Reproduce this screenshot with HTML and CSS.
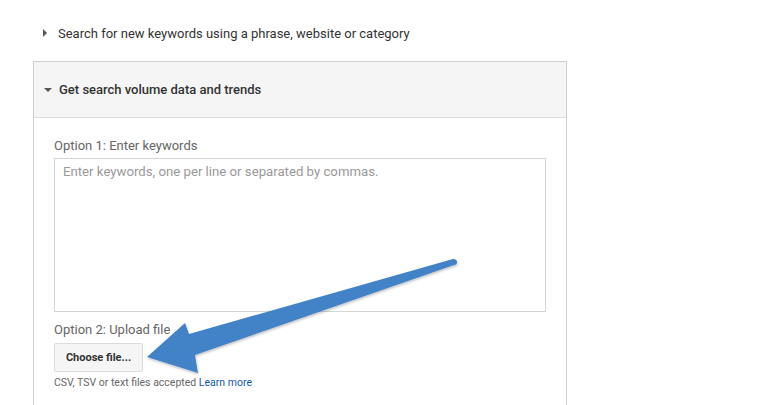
FILE: index.html
```html
<!DOCTYPE html>
<html>
<head>
<meta charset="utf-8">
<link rel="stylesheet" href="styles.css">
</head>
<body>
<div class="page">
  <div class="collapsed-item">
    <span class="tri-right"></span>
    <span class="collapsed-label">Search for new keywords using a phrase, website or category</span>
  </div>
  <div class="panel">
    <div class="panel-header">
      <span class="tri-down"></span>
      <span class="panel-title">Get search volume data and trends</span>
    </div>
    <div class="panel-body">
      <div class="field-label">Option 1: Enter keywords</div>
      <div class="textarea">Enter keywords, one per line or separated by commas.</div>
      <div class="field-label second">Option 2: Upload file</div>
      <div class="button">Choose file...</div>
      <div class="hint">CSV, TSV or text files accepted <span class="link">Learn more</span></div>
    </div>
  </div>
  <svg class="arrow" width="770" height="405" viewBox="0 0 770 405">
    <defs>
      <filter id="sh" x="-10%" y="-10%" width="120%" height="130%">
        <feDropShadow dx="0.5" dy="1.5" stdDeviation="1" flood-color="#000" flood-opacity="0.25"/>
      </filter>
    </defs>
    <path d="M147 357 L185 323 L189 334 L453 259 Q457 259 457 262 Q457 265 454 265 L195 355 L198 373 Z" fill="#4282c7" filter="url(#sh)"/>
  </svg>
</div>
</body>
</html>
```
FILE: styles.css
```css
* { box-sizing: border-box; }
html, body { margin: 0; padding: 0; background: #fff; }
body { font-family: Roboto, "Liberation Sans", Arial, sans-serif; color: #333; }
.page { position: relative; width: 770px; height: 405px; overflow: hidden; }
.collapsed-item {
  display: flex; align-items: center;
  height: 20px; margin-top: 23px; padding-left: 43px;
}
.tri-right {
  width: 0; height: 0;
  border-top: 4px solid transparent; border-bottom: 4px solid transparent;
  border-left: 4px solid #555;
  margin-right: 11px;
}
.collapsed-label { font-size: 13px; color: #333; }
.panel {
  margin-top: 18px; margin-left: 33px; width: 534px; height: 360px;
  border: 1px solid #d0d0d0; border-bottom: none;
}
.panel-header {
  height: 56px; background: #f5f5f5; border-bottom: 1px solid #dcdcdc;
  display: flex; align-items: center; padding-left: 10px;
}
.tri-down {
  width: 0; height: 0;
  border-left: 4px solid transparent; border-right: 4px solid transparent;
  border-top: 4px solid #555;
  margin-right: 7px;
}
.panel-title { font-size: 13px; font-weight: 500; color: #333; }
.panel-body { padding: 20px 20px 0 20px; }
.field-label { font-size: 13px; color: #666; line-height: 16px; }
.field-label.second { margin-top: 10px; }
.textarea {
  margin-top: 4px; width: 492px; height: 154px;
  border: 1px solid #d5d5d5; padding: 5px 8px;
  font-size: 13.2px; color: #999; line-height: 16px;
}
.button {
  margin-top: 5px; width: 89px; height: 29px;
  border: 1px solid #dcdcdc; border-radius: 2px; background: #f5f5f5;
  display: flex; align-items: center; justify-content: center;
  font-size: 11px; font-weight: 700; color: #333;
}
.hint { margin-top: 4px; font-size: 10.5px; color: #666; line-height: 14px; }
.link { color: #1558b0; }
.arrow { position: absolute; left: 0; top: 0; pointer-events: none; }
```
